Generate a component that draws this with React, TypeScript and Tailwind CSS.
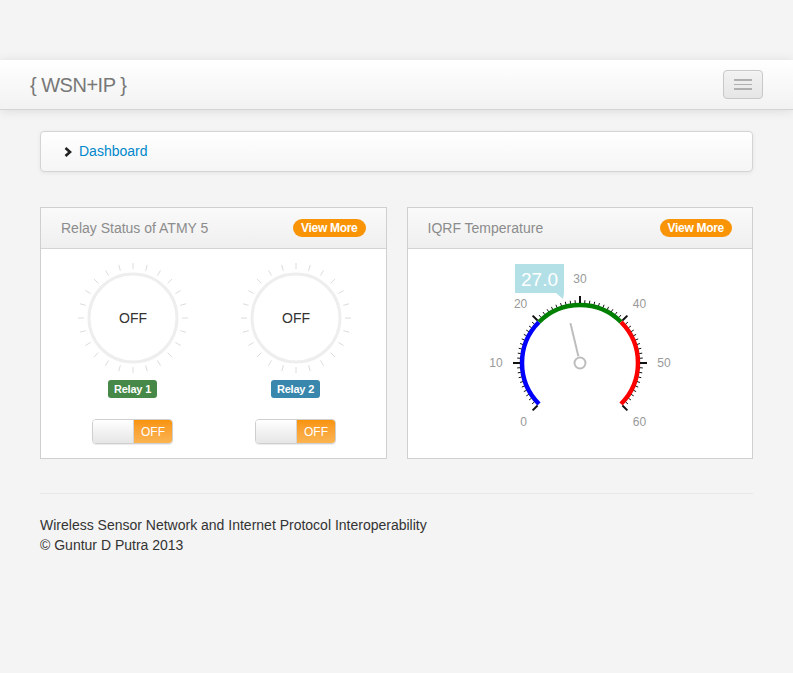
import React from "react";

const font = { fontFamily: '"Liberation Sans", Arial, sans-serif' };

// point on a circle, angle in degrees measured clockwise from 12 o'clock
function polar(cx: number, cy: number, r: number, deg: number) {
    const a = (deg * Math.PI) / 180;
    return { x: cx + r * Math.sin(a), y: cy - r * Math.cos(a) };
}

function arcPath(cx: number, cy: number, r: number, from: number, to: number) {
    const s = polar(cx, cy, r, from);
    const e = polar(cx, cy, r, to);
    const large = to - from > 180 ? 1 : 0;
    return `M ${s.x} ${s.y} A ${r} ${r} 0 ${large} 1 ${e.x} ${e.y}`;
}

function RelayDial() {
    const ticks = Array.from({ length: 24 }, (_, i) => i * 15);
    return (
        <svg width="120" height="120" viewBox="0 0 120 120">
            {ticks.map((d) => {
                const a = polar(60, 60, 49, d);
                const b = polar(60, 60, 55, d);
                return <line key={d} x1={a.x} y1={a.y} x2={b.x} y2={b.y} stroke="#dcdcdc" strokeWidth="1" />;
            })}
            <circle cx="60" cy="60" r="44" fill="white" stroke="#eeeeee" strokeWidth="3" />
            <text x="60" y="65" textAnchor="middle" fontSize="14" fill="#333" style={font}>OFF</text>
        </svg>
    );
}

function Relay({ label, color }: { label: string; color: string }) {
    return (
        <div className="w-[163px] flex flex-col items-center">
            <RelayDial />
            <span className={`mt-[2px] h-[18px] px-[6px] rounded-[3px] text-white text-[11px] font-bold leading-[18px] tracking-[-0.2px] ${color}`}>
                {label}
            </span>
            <div className="mt-[21px] flex h-[25px] w-[81px] rounded-[4px] border border-[#cfcfcf] overflow-hidden shadow-[0_1px_1px_rgba(0,0,0,0.08)]">
                <div className="w-[41px] bg-gradient-to-b from-[#ffffff] to-[#e6e6e6] border-r border-[#d5d5d5]" />
                <div className="flex-1 bg-gradient-to-b from-[#f89406] to-[#fbb450] text-white text-[12px] flex items-center justify-center">
                    OFF
                </div>
            </div>
        </div>
    );
}

function Gauge() {
    const cx = 100;
    const cy = 105;
    const ang = (v: number) => -135 + v * 4.5;
    const ticks = Array.from({ length: 61 }, (_, i) => i);
    const labels = [0, 10, 20, 30, 40, 50, 60];
    const n1 = polar(cx, cy, 7, ang(27));
    const n2 = polar(cx, cy, 41, ang(27));
    return (
        <svg width="200" height="180" viewBox="0 0 200 180" style={font}>
            <path d={arcPath(cx, cy, 58, ang(0), ang(20))} stroke="#0000ff" strokeWidth="4.5" fill="none" />
            <path d={arcPath(cx, cy, 58, ang(20), ang(40))} stroke="#008000" strokeWidth="4.5" fill="none" />
            <path d={arcPath(cx, cy, 58, ang(40), ang(60))} stroke="#ff0000" strokeWidth="4.5" fill="none" />
            {ticks.map((v) => {
                const major = v % 10 === 0;
                const a = polar(cx, cy, 60, ang(v));
                const b = polar(cx, cy, major ? 67 : 63, ang(v));
                return <line key={v} x1={a.x} y1={a.y} x2={b.x} y2={b.y} stroke="#111" strokeWidth={major ? 2 : 1} />;
            })}
            {labels.map((v) => {
                const p = polar(cx, cy, 84, ang(v));
                const dx = v === 0 ? 3 : 0;
                return (
                    <text key={v} x={p.x + dx} y={p.y + 4} textAnchor="middle" fontSize="12" fill="#999">
                        {v}
                    </text>
                );
            })}
            <line x1={n1.x} y1={n1.y} x2={n2.x} y2={n2.y} stroke="#bdbdbd" strokeWidth="2" />
            <circle cx={cx} cy={cy} r="5.5" fill="white" stroke="#bdbdbd" strokeWidth="2" />
            {/* value bubble */}
            <rect x="35" y="6" width="49" height="29" fill="#b3e0e6" />
            <polygon points="76,35 84,35 83,41" fill="#b3e0e6" />
            <text x="59.5" y="28" textAnchor="middle" fontSize="19" fill="white">27.0</text>
        </svg>
    );
}

function PanelHeader({ title }: { title: string }) {
    return (
        <div className="h-[41px] flex items-center justify-between px-[20px] bg-gradient-to-b from-[#fafafa] to-[#efefef] border-b border-[#d4d4d4]">
            <span className="text-[14px] text-[#8c8c8c]">{title}</span>
            <span className="h-[18px] px-[8px] rounded-full bg-[#f89406] text-white text-[12px] font-bold leading-[18px] tracking-[-0.3px]">
                View More
            </span>
        </div>
    );
}

function App() {
    return (
        <div className="min-h-[673px] bg-[#f4f4f4] pt-[60px] text-[#333]" style={font}>
            {/* Navbar */}
            <header className="h-[50px] bg-gradient-to-b from-[#ffffff] to-[#f2f2f2] border-b border-[#d4d4d4] shadow-[0_1px_10px_rgba(0,0,0,0.1)] flex items-center justify-between pl-[30px] pr-[30px]">
                <span className="text-[20px] text-[#777] font-light tracking-[-0.5px]">{"{ WSN+IP }"}</span>
                <button className="w-[40px] h-[29px] rounded-[4px] border border-[#c8c8c8] bg-gradient-to-b from-[#f2f2f2] to-[#e6e6e6] flex flex-col items-center justify-center gap-[3px] shadow-[inset_0_1px_0_rgba(255,255,255,0.3)]">
                    <span className="block w-[18px] h-[1.5px] bg-[#b0b0b0]" />
                    <span className="block w-[18px] h-[1.5px] bg-[#b0b0b0]" />
                    <span className="block w-[18px] h-[1.5px] bg-[#b0b0b0]" />
                </button>
            </header>

            <main className="px-[40px]">
                {/* Breadcrumb */}
                <div className="mt-[21px] h-[41px] rounded-[4px] border border-[#d4d4d4] bg-gradient-to-b from-[#ffffff] to-[#f5f5f5] shadow-[0_1px_4px_rgba(0,0,0,0.065)] flex items-center pl-[23px] gap-[7px]">
                    <svg width="8" height="10" viewBox="0 0 8 10">
                        <path d="M1.5 1 L6 5 L1.5 9" stroke="#222" strokeWidth="2.6" fill="none" />
                    </svg>
                    <a className="text-[14px] text-[#0088cc]">Dashboard</a>
                </div>

                {/* Panels */}
                <div className="mt-[35px] grid grid-cols-2 gap-[20px]">
                    <section className="h-[252px] bg-white border border-[#cfcfcf]">
                        <PanelHeader title="Relay Status of ATMY 5" />
                        <div className="flex pl-[10px] pt-[9px]">
                            <Relay label="Relay 1" color="bg-[#468847]" />
                            <Relay label="Relay 2" color="bg-[#3a87ad]" />
                        </div>
                    </section>
                    <section className="h-[252px] bg-white border border-[#cfcfcf]">
                        <PanelHeader title="IQRF Temperature" />
                        <div className="flex justify-center pt-[9px]">
                            <Gauge />
                        </div>
                    </section>
                </div>

                {/* Footer */}
                <hr className="mt-[34px] border-0 border-t border-[#e8e8e8] border-b-white" />
                <footer className="pt-[21px] text-[14px] leading-[20px] text-[#333]">
                    <p>Wireless Sensor Network and Internet Protocol Interoperability</p>
                    <p>© Guntur D Putra 2013</p>
                </footer>
            </main>
        </div>
    );
}

export default App;
